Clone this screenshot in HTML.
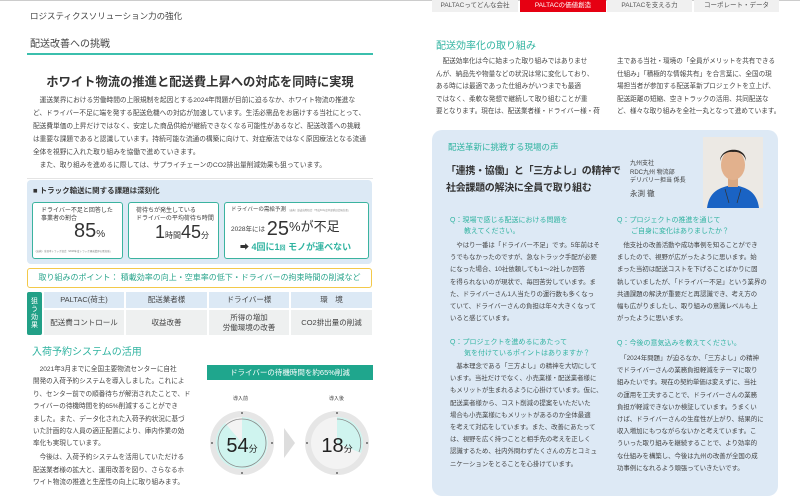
<!DOCTYPE html>
<html><head><meta charset="utf-8"><style>
*{margin:0;padding:0;box-sizing:border-box}
body{width:800px;height:504px;background:#fff;position:relative;overflow:hidden;font-family:"Liberation Sans","Noto Sans CJK JP",sans-serif;color:#3c3c3c}
.a{position:absolute;white-space:nowrap}
.p{font-size:7px;line-height:13px;color:#444}
.tl{color:#2fb3a0}
.box{position:absolute;border:1.5px solid #3bb39f;background:#fff;border-radius:3px}
.cell{position:absolute;display:flex;align-items:center;justify-content:center;text-align:center;font-size:7.5px;line-height:10px;color:#444}
.tab{position:absolute;top:0;height:12px;font-size:6.5px;line-height:12px;text-align:center;background:#f0f0f0;color:#555}
</style></head><body>
<div class="a" style="left:0;top:0;width:800px;height:1px;background:#ccc"></div>
<!-- LEFT PAGE -->
<div class="a" style="left:30px;top:10px;font-size:8.5px;color:#444">ロジスティクスソリューション力の強化</div>
<div class="a" style="left:30px;top:35px;font-size:10px;color:#444">配送改善への挑戦</div>
<div class="a" style="left:27px;top:53px;width:346px;height:2px;background:#3bbfad"></div>
<div class="a" style="left:0;width:400px;text-align:center;top:72px;font-size:12.3px;font-weight:bold;color:#333">ホワイト物流の推進と配送費上昇への対応を同時に実現</div>
<div class="a p" style="left:33px;top:94px;font-size:6.7px">　運送業界における労働時間の上限規制を起因とする2024年問題が目前に迫るなか、ホワイト物流の推進な<br>ど、ドライバー不足に端を発する配送危機への対応が加速しています。生活必需品をお届けする当社にとって、<br>配送費単価の上昇だけではなく、安定した商品供給が継続できなくなる可能性があるなど、配送改善への挑戦<br>は重要な課題であると認識しています。持続可能な流通の構築に向けて、対症療法ではなく原因療法となる流通<br>全体を視野に入れた取り組みを協働で進めていきます。<br>　また、取り組みを進めるに際しては、サプライチェーンのCO2排出量削減効果も狙っています。</div>
<div class="a" style="left:27px;top:178px;width:346px;height:1px;background:#e4e4e4"></div>
<div class="a" style="left:27px;top:180px;width:345px;height:84px;background:#dce9f5;border-radius:4px"></div>
<div class="a" style="left:33px;top:185px;font-size:7.5px;font-weight:bold;color:#333">■ トラック輸送に関する課題は深刻化</div>
<div class="box" style="left:32px;top:202px;width:91px;height:57px"></div>
<div class="a" style="left:41px;top:207px;font-size:6px;line-height:8px">ドライバー不足と回答した<br>事業者の割合</div>
<div class="a" style="left:74px;top:220px;font-size:20px;color:#333">85<span style="font-size:10px">%</span></div>
<div class="a" style="left:34px;top:249px;font-size:2.5px;color:#777">（出典）全日本トラック協会「2018年度トラック運送業界の景況感」</div>
<div class="box" style="left:128px;top:202px;width:91px;height:57px"></div>
<div class="a" style="left:136px;top:207px;font-size:6px;line-height:8px">荷待ちが発生している<br>ドライバーの平均荷待ち時間</div>
<div class="a" style="left:155px;top:222px;font-size:18px;color:#333">1<span style="font-size:8px">時間</span>45<span style="font-size:8px">分</span></div>
<div class="box" style="left:224px;top:202px;width:145px;height:57px"></div>
<div class="a" style="left:231px;top:205px;font-size:5.5px">ドライバーの需給予測 <span style="font-size:2.5px;color:#888">（出典）鉄道貨物協会「平成30年度本部委員会報告書」</span></div>
<div class="a" style="left:231px;top:216px;font-size:6.5px">2028年には <span style="font-size:20px;vertical-align:-4px;color:#333">25</span><span style="font-size:13px;color:#333">%が不足</span></div>
<div class="a" style="left:240px;top:240px;font-size:9px;font-weight:bold;color:#333">➡ <span class="tl">4回に1</span><span class="tl" style="font-size:6px">回</span> <span class="tl">モノが運べない</span></div>
<div class="a" style="left:27px;top:268px;width:345px;height:20px;border:1.5px solid #f3c94a;border-radius:3px;background:#fff;text-align:center;font-size:8px;line-height:17px;color:#2aa58c">取り組みのポイント：  積載効率の向上・空車率の低下・ドライバーの拘束時間の削減など</div>
<div class="cell" style="left:27px;top:292px;width:15px;height:43px;background:#22a087;color:#fff;font-size:7px;line-height:8px;border-radius:2px">狙<br>う<br>効<br>果</div>
<div class="cell" style="left:44px;top:292px;width:80px;height:16px;background:#dce9f5">PALTAC(荷主)</div>
<div class="cell" style="left:126px;top:292px;width:81px;height:16px;background:#dce9f5">配送業者様</div>
<div class="cell" style="left:209px;top:292px;width:80px;height:16px;background:#dce9f5">ドライバー様</div>
<div class="cell" style="left:291px;top:292px;width:81px;height:16px;background:#dce9f5">環　境</div>
<div class="cell" style="left:44px;top:310px;width:80px;height:25px;background:#eef0f0">配送費コントロール</div>
<div class="cell" style="left:126px;top:310px;width:81px;height:25px;background:#eef0f0">収益改善</div>
<div class="cell" style="left:209px;top:310px;width:80px;height:25px;background:#eef0f0">所得の増加<br>労働環境の改善</div>
<div class="cell" style="left:291px;top:310px;width:81px;height:25px;background:#eef0f0">CO2排出量の削減</div>
<div class="a tl" style="left:32px;top:343px;font-size:10px">入荷予約システムの活用</div>
<div class="a p" style="left:33px;top:364px;line-height:12.4px;font-size:6.6px">　2021年3月までに全国主要物流センターに自社<br>開発の入荷予約システムを導入しました。これによ<br>り、センター前での順番待ちが解消されたことで、ド<br>ライバーの待機時間を約65%削減することができ<br>ました。また、データ化された入荷予約状況に基づ<br>いた計画的な人員の適正配置により、庫内作業の効<br>率化も実現しています。<br><span style="line-height:14px">　今後は、入荷予約システムを活用していただける</span><br>配送業者様の拡大と、運用改善を図り、さらなるホ<br>ワイト物流の推進と生産性の向上に取り組みます。</div>
<div class="a" style="left:207px;top:365px;width:166px;height:15px;background:#1fa68d;color:#fff;font-size:7.5px;line-height:15px;text-align:center">ドライバーの待機時間を約65%削減</div>
<div class="a" style="left:233px;top:395px;font-size:5px">導入前</div>
<div class="a" style="left:329px;top:395px;font-size:5px">導入後</div>
<svg class="a" style="left:200px;top:400px" width="180" height="90" viewBox="0 0 180 90">
<circle cx="42" cy="43" r="32" fill="#e6e6e6"/><circle cx="42" cy="43" r="26" fill="#f3f3f3"/>
<path d="M42 43 L42 17 A26 26 0 1 1 25 23 Z" fill="#cff4ef"/>
<circle cx="42" cy="43" r="24" fill="none" stroke="#888" stroke-width="0.8"/>
<circle cx="42" cy="13" r="1" fill="#666"/><circle cx="42" cy="73" r="1" fill="#666"/><circle cx="12" cy="43" r="1" fill="#666"/><circle cx="72" cy="43" r="1" fill="#666"/>
<text x="42" y="52" text-anchor="middle" font-size="20" fill="#222" font-family="Liberation Sans,Noto Sans CJK JP,sans-serif">54<tspan font-size="9">分</tspan></text>
<path d="M84 28 L95 43 L84 58 Z" fill="#ddd"/>
<circle cx="137" cy="43" r="32" fill="#e6e6e6"/><circle cx="137" cy="43" r="26" fill="#f3f3f3"/>
<path d="M137 43 L137 17 A26 26 0 0 1 161 53 Z" fill="#cff4ef"/>
<path d="M137 19 A24 24 0 0 1 159 52" fill="none" stroke="#888" stroke-width="0.8"/>
<circle cx="137" cy="13" r="1" fill="#666"/><circle cx="137" cy="73" r="1" fill="#666"/><circle cx="107" cy="43" r="1" fill="#666"/><circle cx="167" cy="43" r="1" fill="#666"/>
<text x="137" y="52" text-anchor="middle" font-size="20" fill="#222" font-family="Liberation Sans,Noto Sans CJK JP,sans-serif">18<tspan font-size="9">分</tspan></text>
</svg>
<!-- RIGHT PAGE -->
<div class="tab" style="left:432px;width:86px">PALTACってどんな会社</div>
<div class="tab" style="left:520px;width:86px;background:#e60012;color:#fff">PALTACの価値創造</div>
<div class="tab" style="left:607px;width:85px">PALTACを支える力</div>
<div class="tab" style="left:694px;width:85px">コーポレート・データ</div>
<div class="a tl" style="left:436px;top:37px;font-size:10px">配送効率化の取り組み</div>
<div class="a p" style="left:436px;top:56px;line-height:12.5px;font-size:6.6px">　配送効率化は今に始まった取り組みではありませ<br>んが、納品先や物量などの状況は常に変化しており、<br>ある時には最適であった仕組みがいつまでも最適<br>ではなく、柔軟な発想で継続して取り組むことが重<br>要となります。現在は、配送業者様・ドライバー様・荷</div>
<div class="a p" style="left:617px;top:56px;line-height:12.5px;font-size:6.6px">主である当社・環境の「全員がメリットを共有できる<br>仕組み」「積極的な情報共有」を合言葉に、全国の現<br>場担当者が参加する配送革新プロジェクトを立上げ、<br>配送距離の短縮、空きトラックの活用、共同配送な<br>ど、様々な取り組みを全社一丸となって進めています。</div>
<div class="a" style="left:432px;top:130px;width:346px;height:366px;background:#dde9f5;border-radius:10px"></div>
<div class="a tl" style="left:448px;top:141px;font-size:8.5px">配送革新に挑戦する現場の声</div>
<div class="a" style="left:446px;top:163px;font-size:10px;letter-spacing:-0.3px;line-height:17px;font-weight:bold;color:#333">「連携・協働」と「三方よし」の精神で<br>社会課題の解決に全員で取り組む</div>
<div class="a" style="left:630px;top:160px;font-size:6px;line-height:8.5px">九州支社<br>RDC九州  物流部<br>デリバリー担当  係長</div>
<div class="a" style="left:630px;top:188px;font-size:7.5px">永渕  徹</div>
<svg class="a" style="left:703px;top:137px" width="60" height="71" viewBox="0 0 60 71">
<rect width="60" height="71" fill="#ece9e4"/>
<path d="M4 71 C6 55 16 50 30 48 C44 50 54 55 56 71 Z" fill="#1a63c4"/>
<rect x="25" y="38" width="10" height="12" fill="#d9a882"/>
<ellipse cx="30" cy="28" rx="12" ry="15" fill="#e2b18d"/>
<path d="M17 24 C17 10 43 8 43 24 C42 18 36 14 30 15 C24 14 18 18 17 24Z" fill="#2a2420"/>
<path d="M22 52 L26 66 M38 52 L34 66" stroke="#333" stroke-width="0.7"/>
</svg>
<div class="a tl" style="left:450px;top:216px;font-size:7px;line-height:10.5px">Q：現場で感じる配送における問題を<br>　　教えてください。</div>
<div class="a p" style="left:450px;top:240px;font-size:6.4px;line-height:12.2px">　やはり一番は「ドライバー不足」です。5年前はそ<br>うでもなかったのですが、急なトラック手配が必要<br>になった場合、10社依頼しても1～2社しか回答<br>を得られないのが現状で、毎回苦労しています。ま<br>た、ドライバーさん1人当たりの運行数も多くなっ<br>ていて、ドライバーさんの負担は年々大きくなって<br>いると感じています。</div>
<div class="a tl" style="left:617px;top:216px;font-size:7px;line-height:10.5px">Q：プロジェクトの推進を通じて<br>　　ご自身に変化はありましたか？</div>
<div class="a p" style="left:617px;top:240px;font-size:6.4px;line-height:12.2px">　他支社の改善活動や成功事例を知ることができ<br>ましたので、視野が広がったように思います。始<br>まった当初は配送コストを下げることばかりに固<br>執していましたが、「ドライバー不足」という業界の<br>共通課題の解決が重要だと再認識でき、考え方の<br>幅も広がりましたし、取り組みの意識レベルも上<br>がったように思います。</div>
<div class="a tl" style="left:450px;top:338px;font-size:7px;line-height:10.5px">Q：プロジェクトを進めるにあたって<br>　　気を付けているポイントはありますか？</div>
<div class="a p" style="left:450px;top:361px;font-size:6.4px;line-height:12.2px">　基本理念である「三方よし」の精神を大切にして<br>います。当社だけでなく、小売業様・配送業者様に<br>もメリットが生まれるように心掛けています。仮に、<br>配送業者様から、コスト削減の提案をいただいた<br>場合も小売業様にもメリットがあるのか全体最適<br>を考えて対応をしています。また、改善にあたって<br>は、視野を広く持つことと相手先の考えを正しく<br>認識するため、社内外問わずたくさんの方とコミュ<br>ニケーションをとることを心掛けています。</div>
<div class="a tl" style="left:617px;top:338px;font-size:7px">Q：今後の意気込みを教えてください。</div>
<div class="a p" style="left:617px;top:353px;font-size:6.4px;line-height:12.2px">　「2024年問題」が迫るなか、「三方よし」の精神<br>でドライバーさんの業務負担軽減をテーマに取り<br>組みたいです。現在の契約単価は変えずに、当社<br>の運用を工夫することで、ドライバーさんの業務<br>負担が軽減できないか検証しています。うまくい<br>けば、ドライバーさんの生産性が上がり、結果的に<br>収入増加にもつながらないかと考えています。こ<br>ういった取り組みを継続することで、より効率的<br>な仕組みを構築し、今後は九州の改善が全国の成<br>功事例になれるよう頑張っていきたいです。</div>
</body></html>
